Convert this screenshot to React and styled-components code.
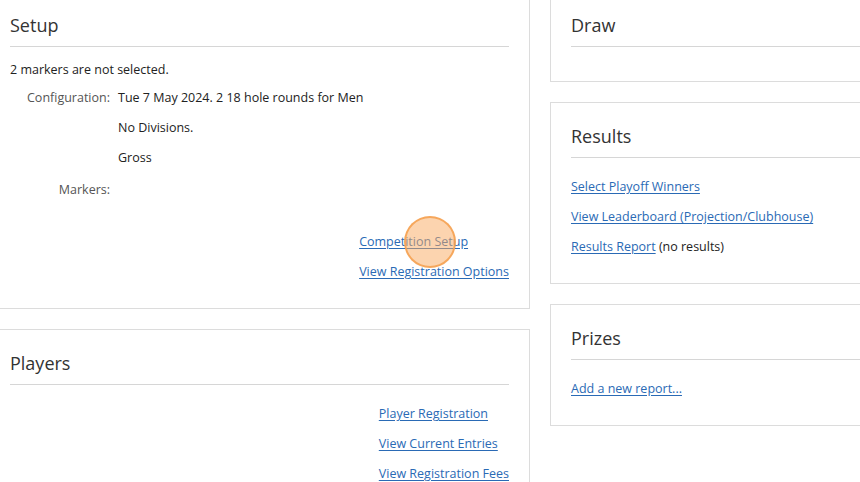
import React from "react";
import styled, { createGlobalStyle } from "styled-components";

const GlobalStyle = createGlobalStyle`
  html, body {
    margin: 0;
    padding: 0;
    background: #fff;
    overflow: hidden;
  }
  body {
    font-family: "Open Sans", "Noto Sans", sans-serif;
    font-size: 12.5px;
    color: #222;
  }
`;

const Page = styled.div`
  display: grid;
  grid-template-columns: 541px 340px;
  column-gap: 20px;
  align-items: start;
  margin: -9px 0 0 -11px;
`;

const Column = styled.div`
  display: flex;
  flex-direction: column;
  gap: 20px;
`;

const Panel = styled.section`
  border: 1px solid #dcdcdc;
  background: #fff;
  padding: 0 20px 16px;
`;

const Title = styled.h2`
  margin: 20px 0 8px;
  font-size: 18px;
  line-height: 26px;
  font-weight: 400;
  color: #333;
`;

const Rule = styled.hr`
  margin: 0;
  border: 0;
  border-top: 1px solid #d6d6d6;
`;

const Body = styled.div`
  display: flex;
  flex-direction: column;
  padding-top: ${(p) => p.$top ?? 19}px;
`;

const Note = styled.p`
  margin: 0 0 3px;
  line-height: 20px;
`;

const Details = styled.div`
  display: grid;
  grid-template-columns: 100px 1fr;
  column-gap: 8px;
  margin-bottom: 27px;
`;

const Label = styled.div`
  text-align: right;
  color: #555;
  line-height: 20px;
  padding: ${(p) => (p.$gap ? "7px 0 5px" : "5px 0")};
`;

const Value = styled.div`
  line-height: 20px;
  padding: ${(p) => (p.$gap ? "7px 0 5px" : "5px 0")};
`;

const LinkList = styled.div`
  display: flex;
  flex-direction: column;
  align-items: flex-start;
  align-self: ${(p) => (p.$right ? "flex-end" : "flex-start")};
`;

const Item = styled.div`
  line-height: 20px;
  margin-bottom: 10px;
  position: relative;
`;

const Link = styled.a`
  color: #2a6ab5;
  text-decoration: underline;
  text-underline-offset: 2px;
  cursor: pointer;
`;

const ClickMark = styled.span`
  position: absolute;
  left: 45px;
  top: -16px;
  width: 48px;
  height: 48px;
  border-radius: 50%;
  border: 2px solid rgba(245, 160, 78, 0.85);
  background: rgba(249, 170, 95, 0.5);
  pointer-events: none;
`;

function Header({ children }) {
  return (
    <>
      <Title>{children}</Title>
      <Rule />
    </>
  );
}

function App() {
  return (
    <>
      <GlobalStyle />
      <Page>
        <Column>
          <Panel>
            <Header>Setup</Header>
            <Body $top={13}>
              <Note>2 markers are not selected.</Note>
              <Details>
                <Label>Configuration:</Label>
                <Value>Tue 7 May 2024. 2 18 hole rounds for Men</Value>
                <Label />
                <Value>No Divisions.</Value>
                <Label />
                <Value>Gross</Value>
                <Label $gap>Markers:</Label>
                <Value $gap />
              </Details>
              <LinkList $right>
                <Item>
                  <Link>Competition Setup</Link>
                  <ClickMark />
                </Item>
                <Item>
                  <Link>View Registration Options</Link>
                </Item>
              </LinkList>
            </Body>
          </Panel>

          <Panel>
            <Header>Players</Header>
            <Body>
              <LinkList $right>
                <Item>
                  <Link>Player Registration</Link>
                </Item>
                <Item>
                  <Link>View Current Entries</Link>
                </Item>
                <Item>
                  <Link>View Registration Fees</Link>
                </Item>
              </LinkList>
            </Body>
          </Panel>
        </Column>

        <Column>
          <Panel>
            <Header>Draw</Header>
            <Body $top={18} />
          </Panel>

          <Panel>
            <Header>Results</Header>
            <Body>
              <LinkList>
                <Item>
                  <Link>Select Playoff Winners</Link>
                </Item>
                <Item>
                  <Link>View Leaderboard (Projection/Clubhouse)</Link>
                </Item>
                <Item>
                  <Link>Results Report</Link> (no results)
                </Item>
              </LinkList>
            </Body>
          </Panel>

          <Panel>
            <Header>Prizes</Header>
            <Body>
              <LinkList>
                <Item>
                  <Link>Add a new report...</Link>
                </Item>
              </LinkList>
            </Body>
          </Panel>
        </Column>
      </Page>
    </>
  );
}

export default App;
